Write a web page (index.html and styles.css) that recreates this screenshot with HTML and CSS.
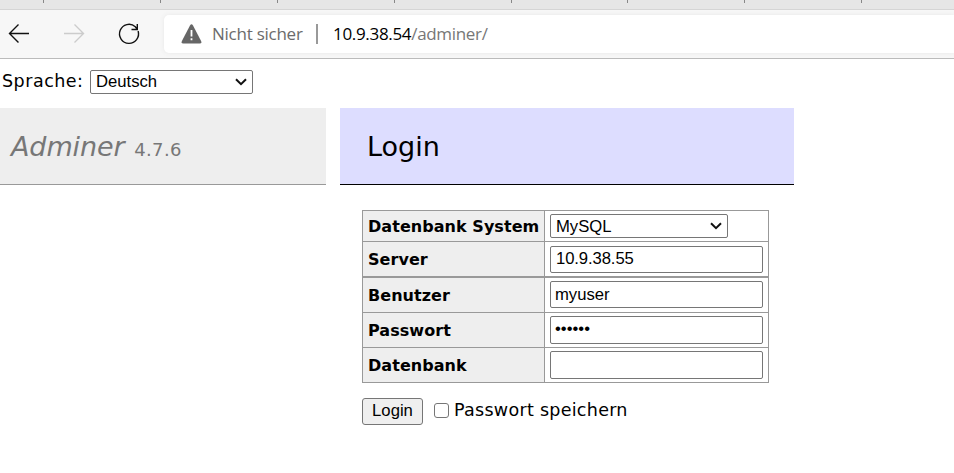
FILE: index.html
```html
<!DOCTYPE html>
<html lang="de">
<head>
<meta charset="utf-8">
<title>Login - Adminer</title>
<link rel="stylesheet" href="styles.css">
</head>
<body>
<header class="browser">
  <div class="tabs"><i></i><i></i><i></i><i></i><i></i><i></i><i></i><i></i></div>
  <div class="toolbar">
    <svg class="nav" width="164" height="38" viewBox="0 0 164 38" fill="none" stroke-width="1.4">
      <path d="M29 18.5H9.5M18.5 9.5L9.5 18.5L18.5 27.5" stroke="#111"/>
      <path d="M64 18.5H83.5M74.5 9.5L83.5 18.5L74.5 27.5" stroke="#ccc"/>
      <path d="M138.1 16A9.5 9.5 0 1 1 135.3 11.7L137.3 14.3M137.3 9V14.5H131.5" stroke="#111"/>
    </svg>
    <div class="address">
      <svg class="warning" width="21" height="20" viewBox="0 0 21 20">
        <path d="M9 1.4Q10.5-.8 12 1.4L20.1 17Q21 19.4 18.7 19.4H2.3Q0 19.4.9 17Z" fill="#666"/>
        <path d="M10.5 6V12.5M10.5 14.2V16.3" stroke="#fff" stroke-width="1.8"/>
      </svg>
      <span class="insecure">Nicht sicher</span>
      <span class="divider"></span>
      <span class="url"><b>10.9.38.54</b>/adminer/</span>
    </div>
  </div>
</header>
<div class="language">
  <span class="language-label">Sprache:</span>
  <div class="select" role="combobox"><span>Deutsch</span><svg width="12" height="8" viewBox="0 0 12 8"><path d="M1 1.2L6 6.2L11 1.2"/></svg></div>
</div>
<div class="columns">
  <aside><h1><em>Adminer</em> <span>4.7.6</span></h1></aside>
  <main>
    <h2><span>Login</span></h2>
    <form>
      <div class="fields">
        <div class="row system"><label>Datenbank System</label><div class="cell"><div class="select" role="combobox"><span>MySQL</span><svg width="12" height="8" viewBox="0 0 12 8"><path d="M1 1.2L6 6.2L11 1.2"/></svg></div></div></div>
        <div class="row server"><label>Server</label><div class="cell"><div class="input" role="textbox">10.9.38.55</div></div></div>
        <div class="row"><label>Benutzer</label><div class="cell"><div class="input user" role="textbox">myuser</div></div></div>
        <div class="row"><label>Passwort</label><div class="cell"><div class="input password" role="textbox">••••••</div></div></div>
        <div class="row"><label>Datenbank</label><div class="cell"><div class="input tall" role="textbox"></div></div></div>
      </div>
      <div class="actions">
        <button type="button">Login</button>
        <span class="checkbox" role="checkbox"></span>
        <span class="remember">Passwort speichern</span>
      </div>
    </form>
  </main>
</div>
</body>
</html>
```
FILE: styles.css
```css
* { box-sizing: border-box; }
body { margin: 0; height: 473px; overflow: hidden; background: #fff; color: #000; font-family: "DejaVu Sans", sans-serif; font-size: 17.5px; }
svg { display: block; flex: none; }
.browser { height: 59px; background: #f7f7f7; border-bottom: 1px solid #bbb; }
.tabs { display: flex; gap: 115.9px; height: 10px; padding-left: 43px; background: #e6e6e6; border-bottom: 1px solid #d5d5d5; }
.tabs i { flex: none; width: 1px; height: 3px; background: #888; }
.toolbar { display: flex; padding-top: 5px; }
.address { display: flex; align-items: center; flex: 1; height: 38px; padding-left: 17px; border-radius: 5px 0 0 5px; background: #fff; box-shadow: 0 0 5px #e8e8e8; font: 18px/24px "Open Sans", "Noto Sans", sans-serif; white-space: nowrap; }
.insecure { width: 94px; margin-left: 10px; color: #6b6b6b; font-size: 17px; letter-spacing: -.25px; }
.divider { width: 2px; height: 20px; margin-left: 10px; background: #999; }
.url { margin-left: 15px; color: #777; font-size: 17px; letter-spacing: -.32px; }
.url b { color: #000; font-weight: 400; }
.language { display: flex; height: 49px; padding: 11px 0 0 2px; }
.language-label { width: 88px; line-height: 22px; letter-spacing: .5px; }
.select { display: flex; align-items: center; justify-content: space-between; width: 178px; height: 24px; padding: 0 5px; border: 1px solid #767676; border-radius: 2px; background: #fff; font: 16.67px/22px "Liberation Sans", sans-serif; }
.select path { fill: none; stroke: #111; stroke-width: 2; }
.language .select { width: 163px; }
.system .select span { padding-top: 2px; }
.columns { display: flex; gap: 14px; }
aside { width: 326px; }
h1, h2 { height: 77px; margin: 0; font-weight: 400; font-size: 27px; line-height: 78px; }
h1 { padding-left: 11px; border-bottom: 1px solid #999; background: #eee; color: #777; white-space: nowrap; }
h1 em { letter-spacing: -.1px; }
h1 span { margin-left: 1px; font-size: 18px; letter-spacing: .4px; }
h2 { width: 454px; padding-left: 27px; border-bottom: 1px solid #000; background: #ddf; }
form { padding: 25px 0 0 22px; }
.fields { width: 407px; border: 1px solid #999; border-bottom: 0; }
.row { display: flex; height: 35px; border-bottom: 1px solid #999; }
.row.system { height: 31px; }
.row.server { height: 36px; border-bottom-width: 2px; }
.row label { display: flex; align-items: center; width: 182px; padding-left: 5px; border-right: 1px solid #999; background: #eee; font-weight: 700; font-size: 16px; letter-spacing: .05px; white-space: nowrap; }
.cell { padding: 3px 0 0 5px; }
.server .cell { padding-top: 4px; }
.input { width: 213px; height: 27px; padding-left: 5px; border: 1px solid #767676; border-radius: 2px; font: 16.67px/24px "Liberation Sans", sans-serif; letter-spacing: -.1px; }
.input.user { padding-left: 4px; line-height: 25px; letter-spacing: 0; }
.input.password, .input.tall { height: 28px; }
.input.password { padding-left: 4px; letter-spacing: 0; }
.actions { display: flex; padding-top: 15px; }
button { width: 61px; height: 27px; padding: 0 0 2px; border: 1px solid #767676; border-radius: 3px; background: #efefef; color: #000; font: 16.67px/23px "Liberation Sans", sans-serif; }
.checkbox { width: 15px; height: 15px; margin: 5px 5px 0 11px; border: 1px solid #767676; border-radius: 3px; }
.remember { line-height: 24px; letter-spacing: .28px; white-space: nowrap; }
```
